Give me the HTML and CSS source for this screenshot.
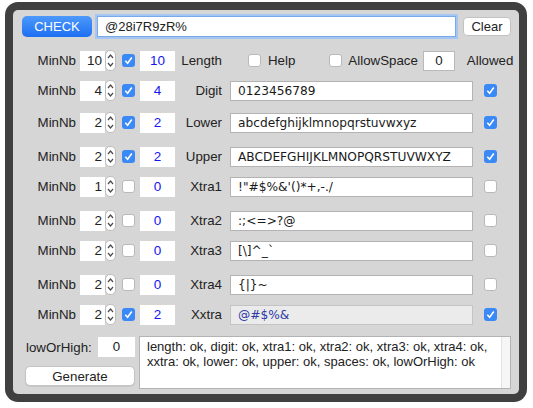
FILE: index.html
```html
<!DOCTYPE html>
<html lang="en">

<head>
    <meta charset="UTF-8">
    <title>Password check</title>
    <link rel="stylesheet" href="styles.css">
</head>

<body>
    <div class="window">
        <div class="panel">
            <div class="topbar">
                <button class="check-btn">CHECK</button>
                <input type="text" class="pwd" value="@28i7R9zR%">
                <button class="clear-btn">Clear</button>
            </div>

            <div class="row first">
                <span class="lbl">MinNb</span>
                <span class="num"><span class="num-box">10</span><span class="spin"><svg width="7" height="15" viewBox="0 0 7 15"><path d="M1 5 L3.5 2 L6 5 M1 10 L3.5 13 L6 10" fill="none" stroke="#4a4a4a" stroke-width="1.2"/></svg></span></span>
                <span class="cb on"><svg width="13" height="13" viewBox="0 0 13 13"><path d="M3.3 6.8 L5.6 9.2 L9.8 3.6" fill="none" stroke="#fff" stroke-width="1.6"/></svg></span>
                <span class="count">10</span>
                <span class="name">Length</span>
                <div class="options">
                    <span class="cb help-cb"></span>
                    <span class="opt-lbl">Help</span>
                    <span class="cb space-cb"></span>
                    <span class="opt-lbl">AllowSpace</span>
                    <span class="small-box">0</span>
                    <span class="allowed">Allowed</span>
                </div>
            </div>

            <div class="row gap10">
                <span class="lbl">MinNb</span>
                <span class="num"><span class="num-box">4</span><span class="spin"><svg width="7" height="15" viewBox="0 0 7 15"><path d="M1 5 L3.5 2 L6 5 M1 10 L3.5 13 L6 10" fill="none" stroke="#4a4a4a" stroke-width="1.2"/></svg></span></span>
                <span class="cb on"><svg width="13" height="13" viewBox="0 0 13 13"><path d="M3.3 6.8 L5.6 9.2 L9.8 3.6" fill="none" stroke="#fff" stroke-width="1.6"/></svg></span>
                <span class="count">4</span>
                <span class="name">Digit</span>
                <span class="chars">0123456789</span>
                <span class="cb on right-cb"><svg width="13" height="13" viewBox="0 0 13 13"><path d="M3.3 6.8 L5.6 9.2 L9.8 3.6" fill="none" stroke="#fff" stroke-width="1.6"/></svg></span>
            </div>

            <div class="row gap12">
                <span class="lbl">MinNb</span>
                <span class="num"><span class="num-box">2</span><span class="spin"><svg width="7" height="15" viewBox="0 0 7 15"><path d="M1 5 L3.5 2 L6 5 M1 10 L3.5 13 L6 10" fill="none" stroke="#4a4a4a" stroke-width="1.2"/></svg></span></span>
                <span class="cb on"><svg width="13" height="13" viewBox="0 0 13 13"><path d="M3.3 6.8 L5.6 9.2 L9.8 3.6" fill="none" stroke="#fff" stroke-width="1.6"/></svg></span>
                <span class="count">2</span>
                <span class="name">Lower</span>
                <span class="chars">abcdefghijklmnopqrstuvwxyz</span>
                <span class="cb on right-cb"><svg width="13" height="13" viewBox="0 0 13 13"><path d="M3.3 6.8 L5.6 9.2 L9.8 3.6" fill="none" stroke="#fff" stroke-width="1.6"/></svg></span>
            </div>

            <div class="row gap14">
                <span class="lbl">MinNb</span>
                <span class="num"><span class="num-box">2</span><span class="spin"><svg width="7" height="15" viewBox="0 0 7 15"><path d="M1 5 L3.5 2 L6 5 M1 10 L3.5 13 L6 10" fill="none" stroke="#4a4a4a" stroke-width="1.2"/></svg></span></span>
                <span class="cb on"><svg width="13" height="13" viewBox="0 0 13 13"><path d="M3.3 6.8 L5.6 9.2 L9.8 3.6" fill="none" stroke="#fff" stroke-width="1.6"/></svg></span>
                <span class="count">2</span>
                <span class="name">Upper</span>
                <span class="chars">ABCDEFGHIJKLMNOPQRSTUVWXYZ</span>
                <span class="cb on right-cb"><svg width="13" height="13" viewBox="0 0 13 13"><path d="M3.3 6.8 L5.6 9.2 L9.8 3.6" fill="none" stroke="#fff" stroke-width="1.6"/></svg></span>
            </div>

            <div class="row gap10">
                <span class="lbl">MinNb</span>
                <span class="num"><span class="num-box">1</span><span class="spin"><svg width="7" height="15" viewBox="0 0 7 15"><path d="M1 5 L3.5 2 L6 5 M1 10 L3.5 13 L6 10" fill="none" stroke="#4a4a4a" stroke-width="1.2"/></svg></span></span>
                <span class="cb"></span>
                <span class="count">0</span>
                <span class="name">Xtra1</span>
                <span class="chars">!"#$%&amp;'()*+,-./</span>
                <span class="cb right-cb"></span>
            </div>

            <div class="row gap14">
                <span class="lbl">MinNb</span>
                <span class="num"><span class="num-box">2</span><span class="spin"><svg width="7" height="15" viewBox="0 0 7 15"><path d="M1 5 L3.5 2 L6 5 M1 10 L3.5 13 L6 10" fill="none" stroke="#4a4a4a" stroke-width="1.2"/></svg></span></span>
                <span class="cb"></span>
                <span class="count">0</span>
                <span class="name">Xtra2</span>
                <span class="chars">:;&lt;=&gt;?@</span>
                <span class="cb right-cb"></span>
            </div>

            <div class="row gap10">
                <span class="lbl">MinNb</span>
                <span class="num"><span class="num-box">2</span><span class="spin"><svg width="7" height="15" viewBox="0 0 7 15"><path d="M1 5 L3.5 2 L6 5 M1 10 L3.5 13 L6 10" fill="none" stroke="#4a4a4a" stroke-width="1.2"/></svg></span></span>
                <span class="cb"></span>
                <span class="count">0</span>
                <span class="name">Xtra3</span>
                <span class="chars">[\]^_`</span>
                <span class="cb right-cb"></span>
            </div>

            <div class="row gap14">
                <span class="lbl">MinNb</span>
                <span class="num"><span class="num-box">2</span><span class="spin"><svg width="7" height="15" viewBox="0 0 7 15"><path d="M1 5 L3.5 2 L6 5 M1 10 L3.5 13 L6 10" fill="none" stroke="#4a4a4a" stroke-width="1.2"/></svg></span></span>
                <span class="cb"></span>
                <span class="count">0</span>
                <span class="name">Xtra4</span>
                <span class="chars">{|}~</span>
                <span class="cb right-cb"></span>
            </div>

            <div class="row gap10">
                <span class="lbl">MinNb</span>
                <span class="num"><span class="num-box">2</span><span class="spin"><svg width="7" height="15" viewBox="0 0 7 15"><path d="M1 5 L3.5 2 L6 5 M1 10 L3.5 13 L6 10" fill="none" stroke="#4a4a4a" stroke-width="1.2"/></svg></span></span>
                <span class="cb on"><svg width="13" height="13" viewBox="0 0 13 13"><path d="M3.3 6.8 L5.6 9.2 L9.8 3.6" fill="none" stroke="#fff" stroke-width="1.6"/></svg></span>
                <span class="count">2</span>
                <span class="name">Xxtra</span>
                <span class="chars readonly">@#$%&amp;</span>
                <span class="cb on right-cb"><svg width="13" height="13" viewBox="0 0 13 13"><path d="M3.3 6.8 L5.6 9.2 L9.8 3.6" fill="none" stroke="#fff" stroke-width="1.6"/></svg></span>
            </div>

            <div class="bottom">
                <div class="bottom-left">
                    <div class="low-row">
                        <span class="low-lbl">lowOrHigh:</span>
                        <span class="low-box">0</span>
                    </div>
                    <button class="gen-btn">Generate</button>
                </div>
                <div class="output">
                    <div class="output-text">length: ok, digit: ok, xtra1: ok, xtra2: ok, xtra3: ok, xtra4: ok, xxtra: ok, lower: ok, upper: ok, spaces: ok, lowOrHigh: ok</div>
                    <div class="track"></div>
                </div>
            </div>
        </div>
    </div>
</body>

</html>
```

FILE: styles.css
```css
body {
    margin: 0;
    padding: 0;
    background-color: #ffffff;
    font-family: "Liberation Sans", Arial, sans-serif;
    font-size: 13.3px;
    color: #222222;
}

.window {
    box-sizing: border-box;
    width: 522px;
    height: 400px;
    margin: 2px 0 0 5px;
    padding: 8px;
    background-color: #404040;
    border-radius: 13px;
}

.panel {
    box-sizing: border-box;
    height: 100%;
    background-color: #d6d6d6;
    border-radius: 5px;
    padding: 6px 8px 0 9px;
}

/* top bar */
.topbar {
    display: flex;
    align-items: center;
    height: 21px;
}

.check-btn {
    width: 70px;
    height: 21px;
    border: none;
    border-radius: 5px;
    background: linear-gradient(#4d99fb, #1d6ff2);
    color: #ffffff;
    font-family: "Liberation Sans", Arial, sans-serif;
    font-size: 13px;
    padding: 0;
}

.pwd {
    box-sizing: border-box;
    width: 359px;
    height: 21px;
    margin-left: 5px;
    padding: 0 0 0 7px;
    border: 1px solid #7aa9ea;
    box-shadow: 0 0 0 2px #a5c6f2;
    outline: none;
    background: #ffffff;
    font-family: "Liberation Sans", Arial, sans-serif;
    font-size: 13px;
    color: #222222;
}

.clear-btn {
    box-sizing: border-box;
    width: 48px;
    height: 19px;
    margin-left: 7px;
    padding: 0;
    border: 1px solid #c2c2c2;
    border-radius: 4px;
    background: #ffffff;
    font-family: "Liberation Sans", Arial, sans-serif;
    font-size: 13px;
    color: #222222;
}

/* option rows */
.row {
    display: grid;
    grid-template-columns: 58px 36px 24px 35px 55px 243px auto;
    align-items: center;
    height: 20px;
}

.row.first {
    margin-top: 13px;
}

.gap10 {
    margin-top: 10px;
}

.gap12 {
    margin-top: 12px;
}

.gap14 {
    margin-top: 14px;
}

.lbl {
    text-align: right;
    padding-right: 4px;
}

.num {
    display: flex;
    align-items: center;
}

.num-box {
    box-sizing: border-box;
    width: 25px;
    height: 20px;
    line-height: 20px;
    background: #ffffff;
    text-align: right;
    padding-right: 3px;
    font-size: 13.5px;
}

.spin {
    box-sizing: border-box;
    width: 11px;
    height: 21px;
    border: 1px solid #bdbdbd;
    border-radius: 5px;
    background: #ffffff;
    display: flex;
    align-items: center;
    justify-content: center;
}

.cb {
    box-sizing: border-box;
    width: 13px;
    height: 13px;
    margin-left: 6px;
    border: 1px solid #b9b9b9;
    border-radius: 3px;
    background: #ffffff;
    display: flex;
}

.cb.on {
    border: none;
    background: #3b88f7;
}

.right-cb {
    margin-left: 11px;
}

.count {
    height: 20px;
    line-height: 20px;
    background: #ffffff;
    text-align: center;
    color: #1616f0;
    font-size: 13.5px;
}

.name {
    text-align: right;
    padding-right: 8px;
}

.chars {
    box-sizing: border-box;
    height: 20px;
    line-height: 18px;
    border: 1px solid #b3b3b3;
    background: #ffffff;
    padding-left: 7px;
    font-family: "DejaVu Sans", Verdana, sans-serif;
    font-size: 12.2px;
    color: #1a1a1a;
    white-space: pre;
}

.chars.readonly {
    background: #ebebeb;
    border-color: #c4c4c4;
    color: #2b3aa6;
}

.options {
    grid-column: 6 / 8;
    display: flex;
    align-items: center;
}

.help-cb {
    margin-left: 18px;
}

.opt-lbl {
    margin-left: 7px;
}

.space-cb {
    margin-left: 34px;
}

.space-cb + .opt-lbl {
    margin-left: 6px;
}

.small-box {
    box-sizing: border-box;
    width: 32px;
    height: 20px;
    line-height: 18px;
    margin-left: 5px;
    border: 1px solid #b9b9b9;
    background: #ffffff;
    text-align: center;
}

.allowed {
    margin-left: 12px;
}

/* bottom area */
.bottom {
    display: flex;
    margin-top: 12px;
}

.bottom-left {
    width: 110px;
    margin-left: 3px;
}

.low-row {
    display: flex;
    align-items: center;
    height: 20px;
    margin-top: 1px;
}

.low-lbl {
    padding-left: 1px;
}

.low-box {
    width: 37px;
    height: 20px;
    line-height: 20px;
    margin-left: auto;
    background: #ffffff;
    text-align: center;
}

.gen-btn {
    box-sizing: border-box;
    width: 110px;
    height: 20px;
    margin-top: 9px;
    padding: 0;
    border: 1px solid #c4c4c4;
    border-radius: 5px;
    background: #ffffff;
    box-shadow: 0 1px 1px rgba(0, 0, 0, 0.08);
    font-family: "Liberation Sans", Arial, sans-serif;
    font-size: 13.3px;
    color: #222222;
}

.output {
    box-sizing: border-box;
    display: flex;
    width: 372px;
    height: 53px;
    margin-left: 4px;
    border: 1px solid #b3b3b3;
    background: #ffffff;
}

.output-text {
    flex: 1;
    padding: 2px 6px 0 7px;
    font-size: 13px;
    line-height: 15px;
}

.track {
    width: 8px;
    background: #f6f6f6;
    border-left: 1px solid #e3e3e3;
}
```
